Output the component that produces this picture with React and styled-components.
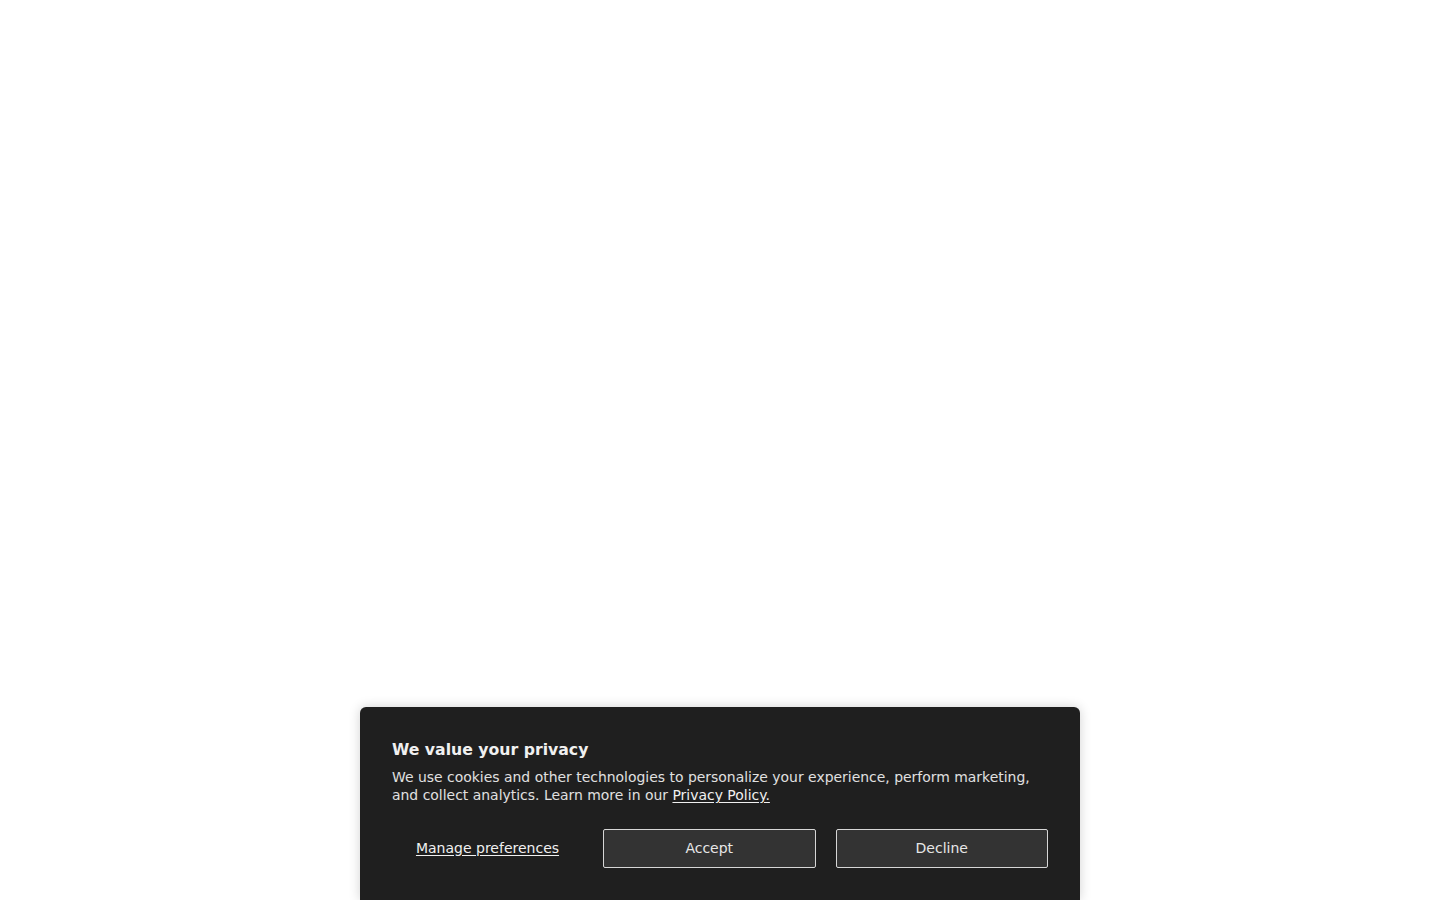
import React from "react";
import styled, { createGlobalStyle } from "styled-components";

const Global = createGlobalStyle`
  html, body { margin: 0; padding: 0; background: #ffffff; }
  body { font-family: "DejaVu Sans", "Open Sans", sans-serif; }
`;

const Page = styled.div`
  width: 100%;
  height: 100vh;
  background: #ffffff;
  display: flex;
  align-items: flex-end;
  justify-content: center;
  overflow: hidden;
`;

const Banner = styled.section`
  width: 720px;
  box-sizing: border-box;
  padding: 33px 32px 32px;
  background: #1f1f1f;
  border-radius: 6px 6px 0 0;
  box-shadow: 0 0 12px rgba(0, 0, 0, 0.18);
  color: #e6e6e6;
`;

const Title = styled.h2`
  margin: 0;
  font-size: 15.7px;
  line-height: 20px;
  font-weight: 700;
  color: #f0f0f0;
`;

const Body = styled.p`
  margin: 8px 0 0;
  font-size: 13.95px;
  line-height: 18px;
  color: #e0e0e0;
`;

const Link = styled.a`
  color: #f0f0f0;
  text-decoration: underline;
  text-underline-offset: 2px;
`;

const Actions = styled.div`
  margin-top: 25px;
  display: grid;
  grid-template-columns: 191px 1fr 1fr;
  column-gap: 20px;
  align-items: center;
`;

const TextButton = styled.button`
  background: none;
  border: none;
  padding: 0 0 2px;
  font: inherit;
  font-size: 14px;
  color: #f0f0f0;
  text-decoration: underline;
  text-underline-offset: 2px;
  cursor: pointer;
  text-align: center;
`;

const Button = styled.button`
  height: 39px;
  box-sizing: border-box;
  padding: 0 0 2px;
  background: #333333;
  border: 1px solid #d6d6d6;
  border-radius: 2px;
  color: #e6e6e6;
  font: inherit;
  font-size: 14px;
  cursor: pointer;
`;

export default function App() {
  return (
    <>
      <Global />
      <Page>
        <Banner>
          <Title>We value your privacy</Title>
          <Body>
            We use cookies and other technologies to personalize your experience, perform marketing,
            and collect analytics. Learn more in our <Link href="#">Privacy Policy.</Link>
          </Body>
          <Actions>
            <TextButton>Manage preferences</TextButton>
            <Button>Accept</Button>
            <Button>Decline</Button>
          </Actions>
        </Banner>
      </Page>
    </>
  );
}
